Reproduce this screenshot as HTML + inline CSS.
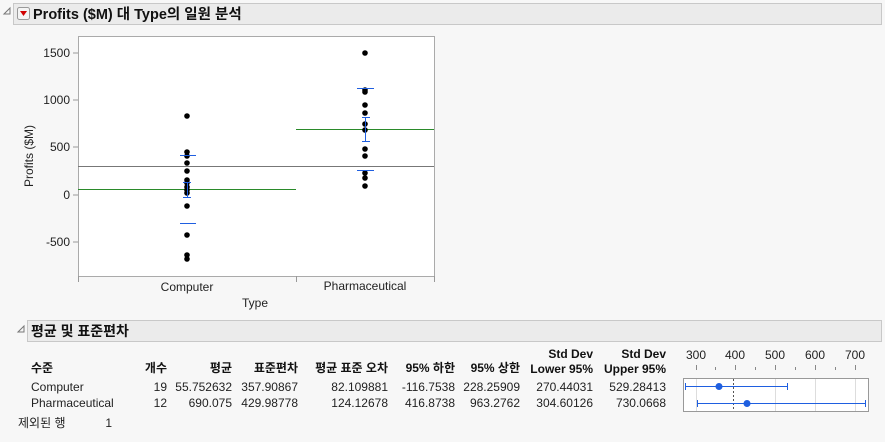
<!DOCTYPE html>
<html><head><meta charset="utf-8"><style>
body{margin:0;background:#f7f7f7;width:885px;height:437px;overflow:hidden}
svg text{font-family:"Liberation Sans","Noto Sans CJK KR",sans-serif;font-size:12px;fill:#222}
.b{font-weight:bold;fill:#111}
</style></head><body>
<svg width="885" height="437" viewBox="0 0 885 437">
<path d="M4 14 L10 8 L10 14 Z" fill="none" stroke="#777" stroke-width="1"/>
<rect x="13.5" y="3.5" width="868" height="21" fill="#ebebeb" stroke="#c8c8c8"/>
<rect x="17.5" y="7.5" width="12" height="12" rx="2" fill="#f4f4f4" stroke="#999"/>
<path d="M20 11 L27 11 L23.5 16 Z" fill="#d00000"/>
<text x="33" y="19" class="b" style="font-size:14.5px">Profits ($M) 대 Type의 일원 분석</text>
<rect x="78.5" y="36.5" width="356" height="240" fill="#fff" stroke="#aaa"/>
<g stroke="#999">
<line x1="73" y1="53" x2="78" y2="53"/><line x1="73" y1="100" x2="78" y2="100"/>
<line x1="73" y1="147" x2="78" y2="147"/><line x1="73" y1="195" x2="78" y2="195"/>
<line x1="73" y1="242" x2="78" y2="242"/>
<line x1="78.5" y1="276" x2="78.5" y2="282"/><line x1="296.5" y1="276" x2="296.5" y2="282"/><line x1="434.5" y1="276" x2="434.5" y2="282"/>
</g>
<g text-anchor="end">
<text x="70" y="57">1500</text><text x="70" y="104">1000</text><text x="70" y="151">500</text>
<text x="70" y="199">0</text><text x="70" y="246">-500</text>
</g>
<text transform="translate(33,156) rotate(-90)" text-anchor="middle">Profits ($M)</text>
<text x="187" y="291" text-anchor="middle">Computer</text>
<text x="365" y="290" text-anchor="middle">Pharmaceutical</text>
<text x="255" y="307" text-anchor="middle">Type</text>
<line x1="78" y1="166.5" x2="434" y2="166.5" stroke="#777"/>
<line x1="78" y1="189.5" x2="296" y2="189.5" stroke="#2a8a2a"/>
<line x1="296" y1="129.5" x2="434" y2="129.5" stroke="#2a8a2a"/>
<g fill="#000">
<circle cx="187" cy="116" r="2.8"/><circle cx="187" cy="152" r="2.8"/><circle cx="187" cy="156" r="2.8"/>
<circle cx="187" cy="163" r="2.8"/><circle cx="187" cy="171" r="2.8"/><circle cx="187" cy="180" r="2.8"/>
<circle cx="187" cy="183" r="2.8"/><circle cx="187" cy="187" r="2.8"/><circle cx="187" cy="190" r="2.8"/>
<circle cx="187" cy="193" r="2.8"/><circle cx="187" cy="206" r="2.8"/><circle cx="187" cy="235" r="2.8"/>
<circle cx="187" cy="255" r="2.8"/><circle cx="187" cy="259" r="2.8"/>
<circle cx="365" cy="53" r="2.8"/><circle cx="365" cy="90" r="2.8"/><circle cx="365" cy="92" r="2.8"/>
<circle cx="365" cy="105" r="2.8"/><circle cx="365" cy="113" r="2.8"/><circle cx="365" cy="124" r="2.8"/>
<circle cx="365" cy="130" r="2.8"/><circle cx="365" cy="149" r="2.8"/><circle cx="365" cy="156" r="2.8"/>
<circle cx="365" cy="173" r="2.8"/><circle cx="365" cy="178" r="2.8"/><circle cx="365" cy="186" r="2.8"/>
</g>
<g stroke="#1f5fe0" stroke-width="1">
<line x1="180" y1="155.5" x2="196" y2="155.5"/><line x1="180" y1="223.5" x2="196" y2="223.5"/>
<line x1="183" y1="182.5" x2="191" y2="182.5"/><line x1="183" y1="197.5" x2="191" y2="197.5"/><line x1="187.5" y1="182" x2="187.5" y2="197"/>
<line x1="357" y1="88.5" x2="374" y2="88.5"/><line x1="357" y1="170.5" x2="374" y2="170.5"/>
<line x1="362" y1="117.5" x2="370" y2="117.5"/><line x1="362" y1="141.5" x2="370" y2="141.5"/><line x1="365.5" y1="117" x2="365.5" y2="141"/>
</g>
<path d="M18 332 L24 326 L24 332 Z" fill="none" stroke="#777"/>
<rect x="27.5" y="320.5" width="854" height="21" fill="#ebebeb" stroke="#c8c8c8"/>
<text x="31" y="336" class="b" style="font-size:14px">평균 및 표준편차</text>
<text x="31" y="372" class="b">수준</text>
<g text-anchor="end">
<g class="b"><text x="167" y="372" class="b">개수</text><text x="232" y="372" class="b">평균</text><text x="298" y="372" class="b">표준편차</text>
<text x="388" y="372" class="b">평균 표준 오차</text><text x="455" y="372" class="b">95% 하한</text><text x="520" y="372" class="b">95% 상한</text></g>
<text x="593" y="358" class="b">Std Dev</text><text x="666" y="358" class="b">Std Dev</text>
<text x="593" y="373" class="b">Lower 95%</text><text x="666" y="373" class="b">Upper 95%</text>
<text x="167" y="391">19</text><text x="232" y="391">55.752632</text><text x="298" y="391">357.90867</text>
<text x="388" y="391">82.109881</text><text x="455" y="391">-116.7538</text><text x="520" y="391">228.25909</text>
<text x="593" y="391">270.44031</text><text x="666" y="391">529.28413</text>
<text x="167" y="407">12</text><text x="232" y="407">690.075</text><text x="298" y="407">429.98778</text>
<text x="388" y="407">124.12678</text><text x="455" y="407">416.8738</text><text x="520" y="407">963.2762</text>
<text x="593" y="407">304.60126</text><text x="666" y="407">730.0668</text>
</g>
<text x="31" y="391">Computer</text><text x="31" y="407">Pharmaceutical</text>
<text x="18" y="427">제외된 행</text><text x="112" y="427" text-anchor="end">1</text>
<g text-anchor="middle">
<text x="696" y="359">300</text><text x="735" y="359">400</text><text x="775" y="359">500</text>
<text x="815" y="359">600</text><text x="855" y="359">700</text>
</g>
<g stroke="#888">
<line x1="696.5" y1="365" x2="696.5" y2="370"/><line x1="735.5" y1="365" x2="735.5" y2="370"/>
<line x1="775.5" y1="365" x2="775.5" y2="370"/><line x1="815.5" y1="365" x2="815.5" y2="370"/>
<line x1="855.5" y1="365" x2="855.5" y2="370"/>
<line x1="715.5" y1="367" x2="715.5" y2="370"/><line x1="755.5" y1="367" x2="755.5" y2="370"/>
<line x1="795.5" y1="367" x2="795.5" y2="370"/><line x1="835.5" y1="367" x2="835.5" y2="370"/>
</g>
<rect x="683.5" y="378.5" width="185" height="33" fill="#fff" stroke="#999"/>
<g stroke="#ddd"><line x1="696.5" y1="379" x2="696.5" y2="411"/><line x1="775.5" y1="379" x2="775.5" y2="411"/>
<line x1="815.5" y1="379" x2="815.5" y2="411"/><line x1="855.5" y1="379" x2="855.5" y2="411"/></g>
<line x1="733.5" y1="379" x2="733.5" y2="411" stroke="#555" stroke-dasharray="2,2"/>
<g stroke="#1f5fe0">
<line x1="685" y1="386.5" x2="788" y2="386.5"/><line x1="685.5" y1="383" x2="685.5" y2="390"/><line x1="787.5" y1="383" x2="787.5" y2="390"/>
<line x1="697" y1="403.5" x2="866" y2="403.5"/><line x1="697.5" y1="400" x2="697.5" y2="407"/><line x1="865.5" y1="400" x2="865.5" y2="407"/>
</g>
<circle cx="719" cy="386.5" r="3.5" fill="#1f5fe0"/><circle cx="747" cy="403.5" r="3.5" fill="#1f5fe0"/>
</svg>
</body></html>
